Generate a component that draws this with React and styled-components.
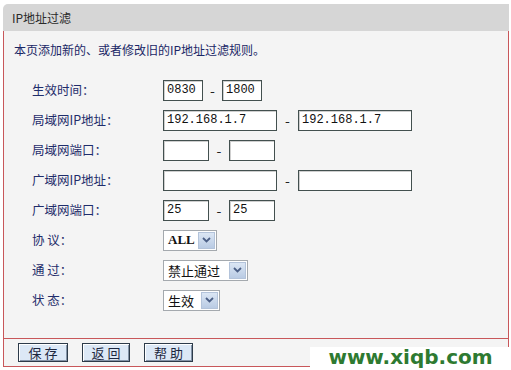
import React from 'react';
import styled, { createGlobalStyle } from 'styled-components';

const GlobalStyle = createGlobalStyle`
  body {
    margin: 0;
    background: #fff;
    font-family: "Noto Sans CJK SC", "Liberation Sans", sans-serif;
    font-size: 12px;
  }
`;

const Page = styled.div`
  position: relative;
  width: 511px;
  height: 370px;
  padding: 4px 2px 0 3px;
  box-sizing: border-box;
`;

const Header = styled.div`
  height: 27px;
  line-height: 27px;
  padding-left: 9px;
  background: #d6d6d6;
  border-top-left-radius: 5px;
  color: #2a2a2a;
  font-size: 12px;
`;

const Body = styled.div`
  background: #f4f4f4;
  border-left: 1px solid #c8575a;
  border-right: 1px solid #c8575a;
  padding-bottom: 23px;
`;

const Intro = styled.div`
  height: 44px;
  box-sizing: border-box;
  padding: 12px 0 0 10px;
  line-height: 14px;
  color: #1a2766;
`;

const Form = styled.div`
  display: grid;
  grid-template-columns: 131px auto;
  grid-auto-rows: 30px;
  padding-left: 28px;
  align-items: center;
  color: #1f2d6b;
`;

const Label = styled.div`
  line-height: 14px;
  font-size: 12.5px;
`;

const Pair = styled.div`
  display: flex;
  align-items: center;
`;

const Field = styled.input`
  width: ${p => p.$w}px;
  height: 21px;
  box-sizing: border-box;
  padding: 0 3px;
  border: 1px solid #43504f;
  box-shadow: inset 1px 1px 0 #cfcfcf;
  background: #fff;
  font-family: "Liberation Mono", monospace;
  font-size: 12px;
  color: #111;
  outline: none;
`;

const Dash = styled.span`
  width: ${p => p.$w}px;
  text-align: center;
  color: #222;
  font-size: 14px;
`;

const Select = styled.div`
  display: flex;
  align-items: center;
  justify-content: space-between;
  width: ${p => p.$w}px;
  height: 21px;
  box-sizing: border-box;
  padding: 1px 1px 1px 4px;
  border: 1px solid #a4a9ae;
  background: #fff;
  color: #111;
  font-size: 13px;
  font-family: ${p => (p.$latin ? '"Liberation Serif", serif' : '"Noto Sans CJK SC", sans-serif')};
  font-weight: ${p => (p.$latin ? 'bold' : 'normal')};
`;

const Arrow = styled.span`
  display: flex;
  align-items: center;
  justify-content: center;
  width: 17px;
  height: 17px;
  box-sizing: border-box;
  border: 1px solid #b3c3da;
  background: linear-gradient(#dbe6f4, #b9cbe4);
`;

const Footer = styled.div`
  display: flex;
  gap: 14px;
  height: 29px;
  box-sizing: border-box;
  padding: 4px 0 0 14px;
  background: #f4f4f4;
  border: 1px solid #c8575a;
`;

const Button = styled.button`
  width: ${p => p.$w}px;
  height: 19px;
  padding: 0;
  border: 1px solid #2d3b4a;
  box-shadow: inset 1px 1px 0 #fff, inset -1px -1px 0 #8494a8;
  background: #dce8f6;
  color: #1d2740;
  font-family: "Noto Sans CJK SC", sans-serif;
  font-size: 13px;
  line-height: 16px;
`;

const Watermark = styled.div`
  position: absolute;
  left: 310px;
  top: 347px;
  width: 201px;
  height: 23px;
  background: #fff;
  color: #2e7a31;
  font-family: "DejaVu Sans", sans-serif;
  font-weight: bold;
  font-size: 20px;
  line-height: 21px;
  text-align: center;
`;

const Chevron = () => (
  <svg width="9" height="6" viewBox="0 0 9 6">
    <path d="M1 1 L4.5 4.5 L8 1" fill="none" stroke="#4b5f86" strokeWidth="1.8" />
  </svg>
);

const Drop = ({ w, latin, children }) => (
  <Select $w={w} $latin={latin}>
    <span>{children}</span>
    <Arrow>
      <Chevron />
    </Arrow>
  </Select>
);

const App = () => (
  <Page>
    <GlobalStyle />
    <Header>IP地址过滤</Header>
    <Body>
      <Intro>本页添加新的、或者修改旧的IP地址过滤规则。</Intro>
      <Form>
        <Label>生效时间：</Label>
        <Pair>
          <Field $w={40} value="0830" readOnly />
          <Dash $w={19}>-</Dash>
          <Field $w={40} value="1800" readOnly />
        </Pair>
        <Label>局域网IP地址：</Label>
        <Pair>
          <Field $w={114} value="192.168.1.7" readOnly />
          <Dash $w={21}>-</Dash>
          <Field $w={114} value="192.168.1.7" readOnly />
        </Pair>
        <Label>局域网端口：</Label>
        <Pair>
          <Field $w={46} value="" readOnly />
          <Dash $w={20}>-</Dash>
          <Field $w={46} value="" readOnly />
        </Pair>
        <Label>广域网IP地址：</Label>
        <Pair>
          <Field $w={114} value="" readOnly />
          <Dash $w={21}>-</Dash>
          <Field $w={114} value="" readOnly />
        </Pair>
        <Label>广域网端口：</Label>
        <Pair>
          <Field $w={46} value="25" readOnly />
          <Dash $w={20}>-</Dash>
          <Field $w={46} value="25" readOnly />
        </Pair>
        <Label>协 议：</Label>
        <Pair>
          <Drop w={54} latin>ALL</Drop>
        </Pair>
        <Label>通 过：</Label>
        <Pair>
          <Drop w={85}>禁止通过</Drop>
        </Pair>
        <Label>状 态：</Label>
        <Pair>
          <Drop w={57}>生效</Drop>
        </Pair>
      </Form>
    </Body>
    <Footer>
      <Button $w={50}>保 存</Button>
      <Button $w={48}>返 回</Button>
      <Button $w={49}>帮 助</Button>
    </Footer>
    <Watermark>www.xiqb.com</Watermark>
  </Page>
);

export default App;
